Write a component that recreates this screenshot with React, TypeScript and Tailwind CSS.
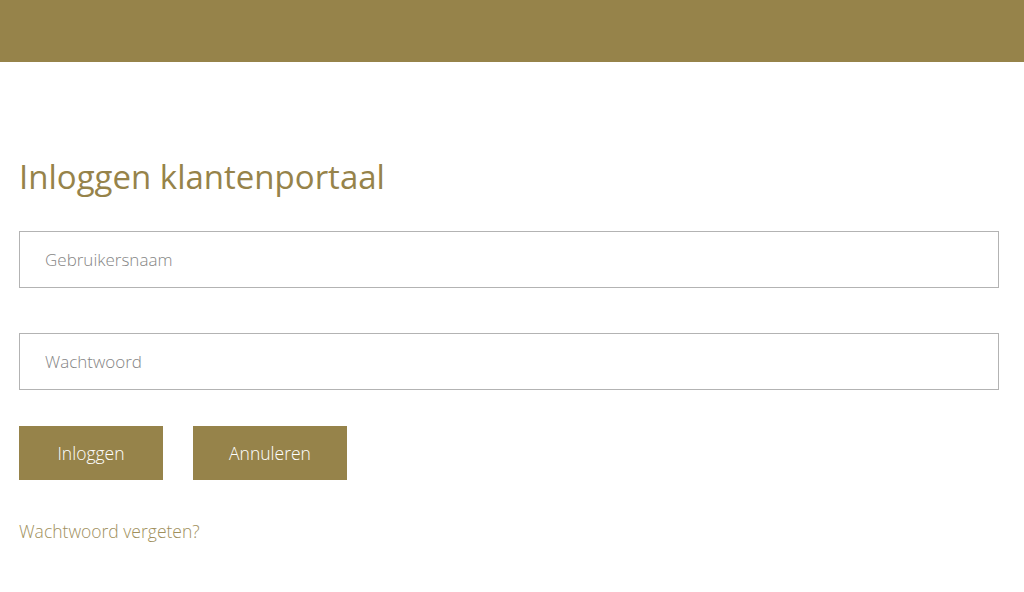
export default function App() {
  return (
    <div className="min-h-screen bg-white" style={{ fontFamily: '"Open Sans", "Noto Sans", sans-serif' }}>
      <div className="h-[62px] bg-[#96834a]" />
      <div className="px-[19px] pr-[25px] pt-[95px]">
        <h1 className="text-[33px] leading-[40px] font-normal text-[#96834a]">Inloggen klantenportaal</h1>
        <div className="mt-[34px] flex flex-col gap-[45px]">
          <input
            type="text"
            placeholder="Gebruikersnaam"
            className="h-[57px] w-full border border-[#b3b3b3] bg-white px-[25px] text-[17px] font-light text-[#555] placeholder:text-[#858585] outline-none"
          />
          <input
            type="password"
            placeholder="Wachtwoord"
            className="h-[57px] w-full border border-[#b3b3b3] bg-white px-[25px] text-[17px] font-light text-[#555] placeholder:text-[#858585] outline-none"
          />
        </div>
        <div className="mt-[36px] flex gap-[30px]">
          <button className="h-[54px] w-[144px] bg-[#96834a] text-[17.5px] font-light text-white">Inloggen</button>
          <button className="h-[54px] w-[154px] bg-[#96834a] text-[17.5px] font-light text-white">Annuleren</button>
        </div>
        <a href="#" className="mt-[38px] block text-[17.5px] font-light text-[#a08f5c]">Wachtwoord vergeten?</a>
      </div>
    </div>
  );
}
